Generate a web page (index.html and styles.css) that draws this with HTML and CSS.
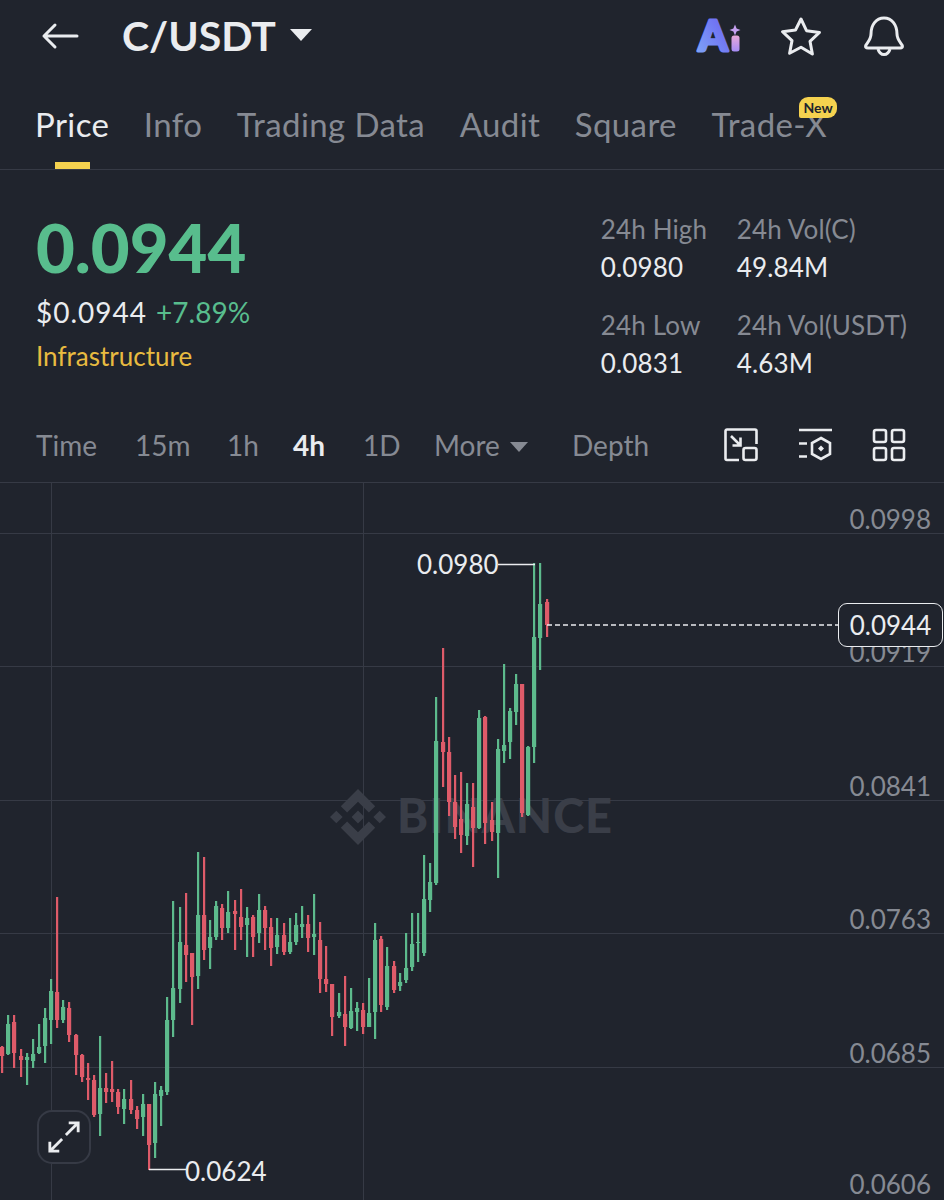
FILE: index.html
```html
<!DOCTYPE html>
<html lang="en">
<head>
    <meta charset="UTF-8">
    <title>C/USDT</title>
    <link rel="stylesheet" href="styles.css">
</head>
<body>

    <header class="topbar">
        <svg class="back-icon" viewBox="0 0 38 28" width="38" height="28">
            <path d="M36 14H3M14 3L3 14l11 11" fill="none" stroke="#eaecef" stroke-width="3" stroke-linecap="round" stroke-linejoin="round"/>
        </svg>
        <h1 class="pair">C/USDT</h1>
        <span class="pair-caret"></span>
        <div class="topbar-icons">
            <svg viewBox="0 0 46 56" width="46" height="56">
                <defs>
                    <linearGradient id="aiA" x1="0" y1="1" x2="1" y2="0">
                        <stop offset="0" stop-color="#7fa8f8"/>
                        <stop offset="1" stop-color="#6a5cf0"/>
                    </linearGradient>
                    <linearGradient id="aiI" x1="0" y1="0" x2="0" y2="1">
                        <stop offset="0" stop-color="#e8a8d8"/>
                        <stop offset="1" stop-color="#a58cf5"/>
                    </linearGradient>
                </defs>
                <text class="ai-letter" x="17" y="43" text-anchor="middle" fill="url(#aiA)" stroke="url(#aiA)">A</text>
                <rect x="35.500" y="27.500" width="8" height="16" rx="2.500" fill="url(#aiI)"/>
                <path d="M39 16.500l1.600 3.900 3.900 1.600-3.900 1.600-1.600 3.900-1.600-3.900-3.900-1.600 3.900-1.600z" fill="#c5a0f0"/>
            </svg>
            <svg class="star-icon" viewBox="0 0 42 40" width="42" height="40">
                <path d="M21 3l5.500 11.700 13 1.700-9.500 8.900 2.400 12.700L21 31.200 9.600 37.300 12 24.600 2.500 15.700l13-1.700z" fill="none" stroke="#eaecef" stroke-width="3" stroke-linejoin="round"/>
            </svg>
            <svg viewBox="0 0 40 42" width="40" height="42">
                <path d="M7 19c0-9 5-16 13-16s13 7 13 16c0 5 3 8 5 11 1 2 0 3-2 3H4c-2 0-3-1-2-3 2-3 5-6 5-11z" fill="none" stroke="#eaecef" stroke-width="3" stroke-linejoin="round"/>
                <path d="M14 34c1 3.500 3 5.500 6 5.500s5-2 6-5.500" fill="none" stroke="#eaecef" stroke-width="3"/>
            </svg>
        </div>
    </header>

    <nav class="tabs">
        <a class="tab active">Price</a>
        <a class="tab">Info</a>
        <a class="tab">Trading Data</a>
        <a class="tab">Audit</a>
        <a class="tab">Square</a>
        <a class="tab tab-new">Trade-X<span class="badge">New</span></a>
    </nav>

    <section class="summary">
        <div class="summary-left">
            <div class="last-price">0.0944</div>
            <div class="fiat-row"><span class="fiat">$0.0944</span><span class="change">+7.89%</span></div>
            <div class="tag">Infrastructure</div>
        </div>
        <div class="stats">
            <div class="stat">
                <div class="stat-label">24h High</div>
                <div class="stat-value">0.0980</div>
            </div>
            <div class="stat">
                <div class="stat-label">24h Vol(C)</div>
                <div class="stat-value">49.84M</div>
            </div>
            <div class="stat">
                <div class="stat-label">24h Low</div>
                <div class="stat-value">0.0831</div>
            </div>
            <div class="stat">
                <div class="stat-label">24h Vol(USDT)</div>
                <div class="stat-value">4.63M</div>
            </div>
        </div>
    </section>

    <section class="intervals">
        <a class="interval iv-time">Time</a>
        <a class="interval iv-15m">15m</a>
        <a class="interval iv-1h">1h</a>
        <a class="interval iv-4h active">4h</a>
        <a class="interval iv-1d">1D</a>
        <a class="interval iv-more">More<span class="more-caret"></span></a>
        <a class="interval">Depth</a>
        <div class="interval-icons">
            <svg viewBox="0 0 34 34" width="34" height="34" fill="none" stroke="#eaecef" stroke-width="2.600">
                <path d="M15 32H3a1.500 1.500 0 0 1-1.500-1.500V3A1.500 1.500 0 0 1 3 1.500h28A1.500 1.500 0 0 1 32.500 3v13"/>
                <path d="M7 8l9 9M16.500 9.500v8h-8"/>
                <rect x="19.500" y="20" width="13" height="12" rx="2"/>
            </svg>
            <svg viewBox="0 0 34 34" width="34" height="34" fill="none" stroke="#eaecef" stroke-width="2.600">
                <path d="M1 2h33M1 15.500h8M1 28.500h8"/>
                <path d="M23 10l9 5v11l-9 5-9-5V15z"/>
                <path d="M23 17.500l3 3-3 3-3-3z" fill="#eaecef" stroke="none"/>
            </svg>
            <svg viewBox="0 0 34 34" width="34" height="34" fill="none" stroke="#eaecef" stroke-width="2.600">
                <rect x="2" y="2" width="12" height="12" rx="2"/>
                <rect x="20" y="2" width="12" height="12" rx="2"/>
                <rect x="2" y="20" width="12" height="12" rx="2"/>
                <rect x="20" y="20" width="12" height="12" rx="2"/>
            </svg>
        </div>
    </section>

    <section class="chart">
        <svg id="chart-svg" class="chart-svg" viewBox="0 483 944 717" width="944" height="717">
            <!-- grid -->
            <g stroke="#363a45" stroke-width="1">
                <path d="M0 533.500H944M0 666.500H944M0 800.500H944M0 933.500H944M0 1067.500H944"/>
                <path d="M51.500 483V1200M363.500 483V1200"/>
            </g>

            <!-- watermark -->
            <g fill="#3a3e48">
                <path transform="translate(330 789) scale(1.75)" d="M9.790 13.450L16 7.240l6.210 6.210 3.610-3.610L16 0 6.180 9.820zM0 16l3.610-3.610L7.220 16l-3.610 3.610zM9.790 18.550L16 24.760l6.210-6.210 3.610 3.610L16 32l-9.820-9.820zM24.780 16l3.610-3.610L32 16l-3.610 3.610zM19.660 16L16 12.340 12.350 16 16 19.660z"/>
                <text class="watermark" x="397" y="833">BINANCE</text>
            </g>

            <g id="candles"></g>

            <!-- high / low markers -->
            <path d="M498 564.500H535M149 1169.500H186" stroke="#eaecef" stroke-width="1.500" fill="none"/>
            <path d="M547 625H838" stroke="#eaecef" stroke-width="1.300" stroke-dasharray="5 3" fill="none"/>
            <text class="marker" x="417" y="574">0.0980</text>
            <text class="marker" x="185" y="1181">0.0624</text>

            <!-- price axis -->
            <g class="axis">
                <text x="931" y="529">0.0998</text>
                <text x="931" y="662">0.0919</text>
                <text x="931" y="796">0.0841</text>
                <text x="931" y="929">0.0763</text>
                <text x="931" y="1063">0.0685</text>
                <text x="931" y="1194">0.0606</text>
            </g>
        </svg>

        <div class="price-pill">0.0944</div>

        <button class="expand">
            <svg viewBox="0 0 36 36" width="36" height="36" fill="none" stroke="#eaecef" stroke-width="3">
                <path d="M20 16L33 3M23 3h10v10M16 20L3 33M3 23v10h10"/>
            </svg>
        </button>
    </section>

    <script src="chart.js"></script>

</body>
</html>
```

FILE: styles.css
```css
/* Basic Reset & Body Styling */
* {
    box-sizing: border-box;
    margin: 0;
    padding: 0;
}

body {
    width: 944px;
    height: 1200px;
    overflow: hidden;
    font-family: Lato, "Noto Sans", sans-serif;
    background-color: #20242d;
    color: #eaecef;
}

/* Top bar */
.topbar {
    display: flex;
    align-items: center;
    height: 72px;
    padding: 0 40px 0 41px;
}

.back-icon {
    margin-right: 43px;
}

.pair {
    font-size: 41px;
    font-weight: 700;
    line-height: 72px;
}

.pair-caret {
    width: 0;
    height: 0;
    margin: -3px 0 0 14px;
    border-left: 11px solid transparent;
    border-right: 11px solid transparent;
    border-top: 12px solid #eaecef;
}

.topbar-icons {
    display: flex;
    align-items: center;
    gap: 40px;
    margin-left: auto;
}

.star-icon {
    margin: 0 2px 0 -2px;
}

.ai-letter {
    font-family: Lato, sans-serif;
    font-size: 42px;
    font-weight: 900;
    stroke-width: 3;
    stroke-linejoin: round;
}

/* Tabs */
.tabs {
    display: flex;
    gap: 34.5px;
    height: 98px;
    padding: 27px 0 0 35px;
    border-bottom: 1px solid #363a45;
}

.tab {
    position: relative;
    height: 70px;
    font-size: 33px;
    letter-spacing: 0.4px;
    line-height: 50px;
    color: #868a93;
}

.tab.active {
    color: #eaecef;
}

.tab.active::after {
    content: "";
    position: absolute;
    left: 20px;
    bottom: 0;
    width: 35px;
    height: 7px;
    background-color: #f5d24f;
}

.badge {
    position: absolute;
    top: -2px;
    right: -10px;
    width: 38px;
    height: 21px;
    border-radius: 9px 9px 9px 2px;
    background-color: #f5d24f;
    color: #20242d;
    font-size: 14px;
    font-weight: 700;
    letter-spacing: 0;
    line-height: 21px;
    text-align: center;
}

/* Price summary */
.summary {
    display: flex;
    justify-content: space-between;
    height: 243px;
    padding: 40px 37px 0 36px;
}

.last-price {
    font-size: 67px;
    font-weight: 900;
    line-height: 74px;
    color: #58bd8d;
}

.fiat-row {
    display: flex;
    gap: 9px;
    margin-top: 10px;
    font-size: 28px;
    line-height: 36px;
}

.fiat {
    letter-spacing: 1px;
}

.change {
    color: #58bd8d;
}

.tag {
    margin-top: 8px;
    font-size: 26px;
    line-height: 36px;
    color: #e8bb40;
}

.stats {
    display: grid;
    grid-template-columns: 136px auto;
    row-gap: 20px;
    align-content: start;
    letter-spacing: 0.15px;
}

.stat-label {
    font-size: 26px;
    line-height: 38px;
    color: #868a93;
}

.stat-value {
    font-size: 26px;
    line-height: 38px;
}

/* Interval row */
.intervals {
    display: flex;
    align-items: center;
    height: 70px;
    padding: 0 38px 6px 36px;
    border-bottom: 1px solid #363a45;
    font-size: 28px;
    color: #868a93;
}

.iv-time { width: 99px; }
.iv-15m { width: 92px; }
.iv-1h { width: 66px; }
.iv-1d { width: 71px; }
.iv-4h { width: 70px; }
.iv-more { width: 138px; }

.interval.active {
    font-weight: 700;
    color: #eaecef;
}

.more-caret {
    display: inline-block;
    width: 0;
    height: 0;
    margin: 0 0 4px 10px;
    border-left: 9px solid transparent;
    border-right: 9px solid transparent;
    border-top: 10px solid #868a93;
}

.interval-icons {
    display: flex;
    gap: 40px;
    margin-left: auto;
}

/* Chart */
.chart {
    position: relative;
    height: 717px;
}

.chart-svg {
    display: block;
}

.chart-svg text {
    font-family: Lato, sans-serif;
}

.watermark {
    font-size: 47px;
    font-weight: 900;
    letter-spacing: 1px;
}

.marker {
    font-size: 26px;
    fill: #eaecef;
}

.axis text {
    font-size: 26px;
    fill: #868a93;
    text-anchor: end;
}

.price-pill {
    position: absolute;
    top: 120px;
    left: 838px;
    width: 105px;
    height: 44px;
    border: 1px solid #eaecef;
    border-radius: 9px;
    background-color: #20242d;
    font-size: 26px;
    line-height: 42px;
    text-align: center;
}

.expand {
    position: absolute;
    top: 627px;
    left: 37px;
    display: flex;
    align-items: center;
    justify-content: center;
    width: 54px;
    height: 54px;
    border: 2px solid #363a45;
    border-radius: 15px;
    background-color: #20242d;
}

.expand svg {
    width: 34px;
    height: 34px;
}
```

FILE: chart.js
```js
// [x, wickTop, wickBottom, bodyTop, bodyBottom, up?]
const CANDLES = [
    [2, 1046, 1073, 1047, 1056, 0], [8, 1015, 1055, 1024, 1054, 1], [14, 1015, 1068, 1022, 1053, 0],
    [21, 1049, 1077, 1056, 1060, 0], [27, 1053, 1085, 1057, 1060, 1], [33, 1039, 1068, 1054, 1061, 1],
    [39, 1024, 1054, 1047, 1053, 1], [45, 1008, 1063, 1018, 1046, 1], [51, 979, 1044, 991, 1020, 1],
    [57, 897, 1028, 992, 1020, 0], [63, 1000, 1023, 1007, 1020, 1], [69, 1002, 1042, 1008, 1035, 0],
    [76, 1034, 1075, 1035, 1055, 0], [82, 1054, 1082, 1055, 1077, 0], [88, 1063, 1100, 1078, 1080, 0],
    [94, 1075, 1117, 1080, 1115, 0], [100, 1036, 1136, 1088, 1114, 1], [106, 1073, 1103, 1088, 1092, 0],
    [112, 1061, 1102, 1089, 1092, 0], [118, 1089, 1114, 1092, 1107, 0], [124, 1089, 1124, 1099, 1109, 1],
    [131, 1080, 1114, 1099, 1110, 0], [137, 1106, 1129, 1110, 1119, 0], [143, 1094, 1136, 1104, 1117, 1],
    [149, 1104, 1170, 1104, 1145, 0], [155, 1082, 1158, 1094, 1143, 1], [161, 1086, 1126, 1090, 1096, 1],
    [167, 997, 1095, 1020, 1092, 1], [173, 901, 1037, 988, 1020, 1], [180, 907, 1003, 942, 989, 1],
    [186, 893, 982, 945, 955, 0], [192, 953, 1025, 953, 977, 0], [198, 852, 989, 915, 976, 1],
    [204, 857, 960, 915, 950, 0], [210, 920, 969, 937, 948, 1], [216, 901, 940, 906, 937, 1],
    [222, 904, 940, 908, 928, 0], [228, 891, 933, 912, 928, 1], [235, 900, 950, 911, 914, 0],
    [241, 889, 940, 917, 927, 0], [247, 907, 957, 918, 925, 1], [253, 915, 957, 917, 937, 0],
    [259, 894, 943, 910, 933, 1], [265, 906, 950, 910, 928, 0], [271, 918, 966, 927, 948, 0],
    [277, 918, 954, 935, 947, 1], [284, 923, 955, 935, 952, 0], [290, 918, 954, 942, 952, 1],
    [296, 913, 945, 925, 942, 1], [302, 906, 938, 924, 927, 1], [308, 915, 952, 924, 938, 0],
    [314, 894, 955, 934, 937, 1], [320, 922, 993, 940, 979, 0], [326, 946, 992, 979, 984, 0],
    [332, 984, 1036, 984, 1017, 0], [339, 993, 1018, 1012, 1016, 1], [345, 976, 1046, 1014, 1027, 0],
    [351, 988, 1029, 1011, 1028, 1], [357, 1002, 1031, 1008, 1012, 1], [363, 1003, 1034, 1010, 1027, 0],
    [369, 978, 1027, 1013, 1027, 1], [375, 923, 1039, 940, 1012, 1], [381, 936, 1012, 939, 1005, 0],
    [387, 947, 1010, 966, 1007, 1], [394, 961, 993, 966, 990, 0], [400, 973, 991, 982, 986, 1],
    [406, 933, 983, 968, 980, 1], [412, 913, 971, 944, 967, 1], [418, 913, 962, 942, 943, 1],
    [424, 855, 956, 899, 953, 1], [430, 863, 912, 882, 900, 1], [436, 697, 885, 741, 883, 1],
    [443, 648, 787, 742, 752, 0], [449, 737, 816, 752, 802, 0], [455, 775, 839, 802, 827, 0],
    [461, 772, 853, 819, 835, 0], [467, 783, 845, 804, 836, 1], [473, 783, 867, 807, 828, 0],
    [479, 710, 829, 718, 828, 1], [485, 716, 844, 717, 823, 0], [492, 802, 841, 820, 832, 0],
    [498, 739, 878, 749, 833, 1], [504, 664, 763, 745, 751, 1], [510, 708, 759, 711, 742, 1],
    [516, 674, 725, 684, 712, 1], [522, 684, 817, 684, 813, 0], [528, 746, 816, 747, 815, 1],
    [534, 563, 763, 637, 747, 1], [540, 563, 670, 604, 638, 1], [547, 599, 637, 602, 625, 0]
];

const SVG_NS = 'http://www.w3.org/2000/svg';
const candleGroup = document.getElementById('candles');

function addRect(x, y, w, h, color) {
    const rect = document.createElementNS(SVG_NS, 'rect');
    rect.setAttribute('x', x);
    rect.setAttribute('y', y);
    rect.setAttribute('width', w);
    rect.setAttribute('height', h);
    rect.setAttribute('fill', color);
    candleGroup.appendChild(rect);
}

CANDLES.forEach(function (c) {
    const color = c[5] ? '#5dba8c' : '#de5b69';
    addRect(c[0] - 1, c[1], 2.2, c[2] - c[1], color);
    addRect(c[0] - 2, c[3], 4.2, c[4] - c[3], color);
});
```
